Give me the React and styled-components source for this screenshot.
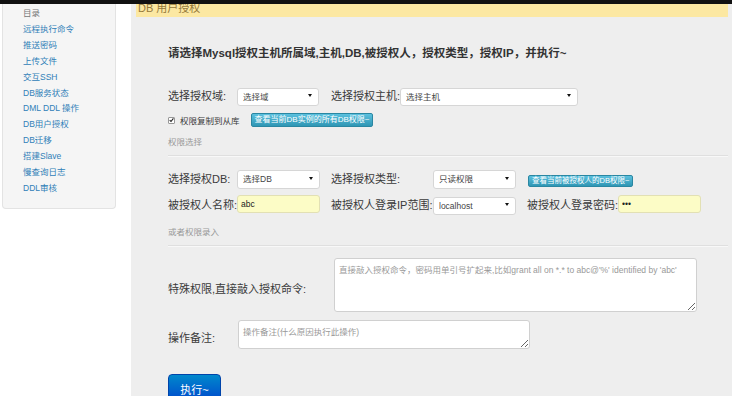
import React from 'react';
import styled, { createGlobalStyle } from 'styled-components';

const FONT = '"Liberation Sans", "Noto Sans CJK SC", Arial, sans-serif';

const GlobalStyle = createGlobalStyle`
  html, body {
    margin: 0;
    padding: 0;
    background: #fff;
    overflow: hidden;
  }
  body {
    font-family: ${FONT};
    color: #333;
  }
  * {
    box-sizing: border-box;
  }
`;

const NavBar = styled.div`
  height: 4px;
  background: #111;
`;

const Layout = styled.div`
  display: flex;
  height: calc(100vh - 4px);
`;

const SideCol = styled.aside`
  width: 131px;
  flex: none;
  padding-left: 2px;
`;

const SideNav = styled.ul`
  list-style: none;
  margin: 0;
  width: 114px;
  padding: 2px 0 11px 20px;
  background: #f5f5f5;
  border: 1px solid #e3e3e3;
  border-top: none;
  border-radius: 0 0 4px 4px;
`;

const NavItem = styled.li`
  font-size: 8.5px;
  line-height: 15.9px;
  color: ${(p) => (p.$head ? '#777' : '#3080b8')};
  white-space: nowrap;
`;

const Main = styled.main`
  flex: 1;
  min-width: 0;
  background: #eee;
  padding: 0 4px 0 5px;
`;

const Banner = styled.div`
  height: 13px;
  background: #fce8a2;
  color: #94793a;
  font-size: 11px;
  line-height: 11px;
  padding-left: 2px;
  overflow: hidden;

  span {
    display: block;
    margin-top: -1px;
  }
`;

const Content = styled.div`
  padding-left: 32px;
`;

const Title = styled.h4`
  margin: 28px 0 0;
  font-size: 11.5px;
  line-height: 16px;
  font-weight: bold;
  color: #333;
  white-space: nowrap;
`;

const FieldRow = styled.div`
  display: flex;
  align-items: center;
  height: ${(p) => p.$h}px;
  margin-top: ${(p) => p.$mt}px;
`;

const Label = styled.label`
  width: ${(p) => (p.$w ? `${p.$w}px` : 'auto')};
  flex: none;
  font-size: 11px;
  color: #3a3a3a;
  white-space: nowrap;
`;

const SelectWrap = styled.div`
  position: relative;
  width: ${(p) => p.$w}px;
  height: ${(p) => p.$h || 19}px;
  flex: none;

  &::after {
    content: '';
    position: absolute;
    right: 7px;
    top: 50%;
    margin-top: -1px;
    border-left: 2px solid transparent;
    border-right: 2px solid transparent;
    border-top: 3px solid #111;
    pointer-events: none;
  }
`;

const Select = styled.select`
  appearance: none;
  width: 100%;
  height: 100%;
  border: 1px solid #d6d6d6;
  border-radius: 3px;
  background: #fff;
  font: 8.5px ${FONT};
  color: #444;
  padding: 0 0 0 5px;
  outline: none;
`;

const TextInput = styled.input`
  width: ${(p) => p.$w}px;
  height: 18px;
  border: 1px solid #e2e0b4;
  border-radius: 3px;
  background: #fcfcc6;
  font: 8.5px ${FONT};
  color: #222;
  padding: 0 3px;
  outline: none;
`;

const CheckLine = styled.label`
  display: flex;
  align-items: center;
  font-size: 8.5px;
  color: #3a3a3a;
  white-space: nowrap;
`;

const CheckBox = styled.span`
  width: 7px;
  height: 7px;
  margin-right: 5px;
  border: 1px solid #999;
  border-radius: 1px;
  background: #fff;
  display: flex;
  align-items: center;
  justify-content: center;
`;

const InfoButton = styled.button`
  height: ${(p) => p.$h}px;
  padding: 0 3px;
  margin-left: ${(p) => p.$ml || 0}px;
  font: ${(p) => p.$fs}px ${FONT};
  line-height: 1;
  color: #fff;
  background: linear-gradient(#5bc0de, #2f96b4);
  border: 1px solid #2a87a2;
  border-radius: 2px;
  white-space: nowrap;
  align-self: ${(p) => p.$align || 'center'};
`;

const SectionNote = styled.div`
  margin-top: ${(p) => p.$mt}px;
  font-size: 8.5px;
  line-height: 12px;
  color: #999;
`;

const Rule = styled.hr`
  margin: ${(p) => p.$mt}px 0 0;
  border: 0;
  border-top: 1px solid #dfdfdf;
  border-bottom: 1px solid #f8f8f8;
`;

const FormGrid = styled.div`
  display: grid;
  grid-template-columns: 69px 94px 102px 94px 91px 83px;
  grid-auto-rows: 19px;
  row-gap: 7px;
  align-items: center;
  margin-top: 11px;
`;

const TextArea = styled.textarea`
  width: ${(p) => p.$w}px;
  height: ${(p) => p.$h}px;
  border: 1px solid #d0d0d0;
  border-radius: 3px;
  background: #fff;
  font: 8.5px ${FONT};
  color: #333;
  padding: 4px 4px;
  outline: none;

  &::placeholder {
    color: #999;
  }
`;

const SubmitButton = styled.button`
  margin-top: 25px;
  width: 53px;
  height: 30px;
  font: 11px ${FONT};
  color: #fff;
  background: linear-gradient(#0088cc, #0044cc);
  border: 1px solid #0044aa;
  border-radius: 4px;
`;

const NAV = ['远程执行命令', '推送密码', '上传文件', '交互SSH', 'DB服务状态', 'DML DDL 操作', 'DB用户授权', 'DB迁移', '搭建Slave', '慢查询日志', 'DDL审核'];

const Dropdown = ({ w, h, value }) => (
  <SelectWrap $w={w} $h={h}>
    <Select defaultValue={value}>
      <option>{value}</option>
    </Select>
  </SelectWrap>
);

export default function App() {
  return (
    <>
      <GlobalStyle />
      <NavBar />
      <Layout>
        <SideCol>
          <SideNav>
            <NavItem $head>目录</NavItem>
            {NAV.map((n) => (
              <NavItem key={n}>{n}</NavItem>
            ))}
          </SideNav>
        </SideCol>
        <Main>
          <Banner>
            <span>DB 用户授权</span>
          </Banner>
          <Content>
            <Title>请选择Mysql授权主机所属域,主机,DB,被授权人，授权类型，授权IP，并执行~</Title>

            <FieldRow $h={18} $mt={25}>
              <Label $w={69}>选择授权域:</Label>
              <Dropdown w={82} h={18} value="选择域" />
              <Label $w={69} style={{ marginLeft: 12 }}>选择授权主机:</Label>
              <Dropdown w={178} h={18} value="选择主机" />
            </FieldRow>

            <FieldRow $h={14} $mt={9}>
              <CheckLine>
                <CheckBox>
                  <svg width="6" height="6" viewBox="0 0 6 6">
                    <path d="M0.8 3.2 L2.4 4.8 L5.3 1" fill="none" stroke="#222" strokeWidth="1.3" />
                  </svg>
                </CheckBox>
                权限复制到从库
              </CheckLine>
              <InfoButton $h={14} $fs={8} $ml={11}>查看当前DB实例的所有DB权限~</InfoButton>
            </FieldRow>

            <SectionNote $mt={9}>权限选择</SectionNote>
            <Rule $mt={7} />

            <FormGrid>
              <Label>选择授权DB:</Label>
              <Dropdown w={83} value="选择DB" />
              <Label>选择授权类型:</Label>
              <Dropdown w={83} value="只读权限" />
              <InfoButton $h={12} $fs={7.5} $align="end" style={{ gridColumn: 'span 2', justifySelf: 'start', marginLeft: 1 }}>
                查看当前被授权人的DB权限~
              </InfoButton>

              <Label>被授权人名称:</Label>
              <TextInput $w={83} defaultValue="abc" />
              <Label>被授权人登录IP范围:</Label>
              <Dropdown w={83} h={18} value="localhost" />
              <Label>被授权人登录密码:</Label>
              <TextInput $w={83} type="password" defaultValue="abc" />
            </FormGrid>

            <SectionNote $mt={13}>或者权限录入</SectionNote>
            <Rule $mt={7} />

            <FieldRow $h={54} $mt={11}>
              <Label $w={166} style={{ marginTop: 6 }}>特殊权限,直接敲入授权命令:</Label>
              <TextArea
                $w={363}
                $h={54}
                placeholder="直接敲入授权命令，密码用单引号扩起来,比如grant all on *.* to abc@'%' identified by 'abc'"
              />
            </FieldRow>

            <FieldRow $h={29} $mt={8}>
              <Label $w={70} style={{ marginTop: 5 }}>操作备注:</Label>
              <TextArea $w={292} $h={29} placeholder="操作备注(什么原因执行此操作)" />
            </FieldRow>

            <SubmitButton>执行~</SubmitButton>
          </Content>
        </Main>
      </Layout>
    </>
  );
}
